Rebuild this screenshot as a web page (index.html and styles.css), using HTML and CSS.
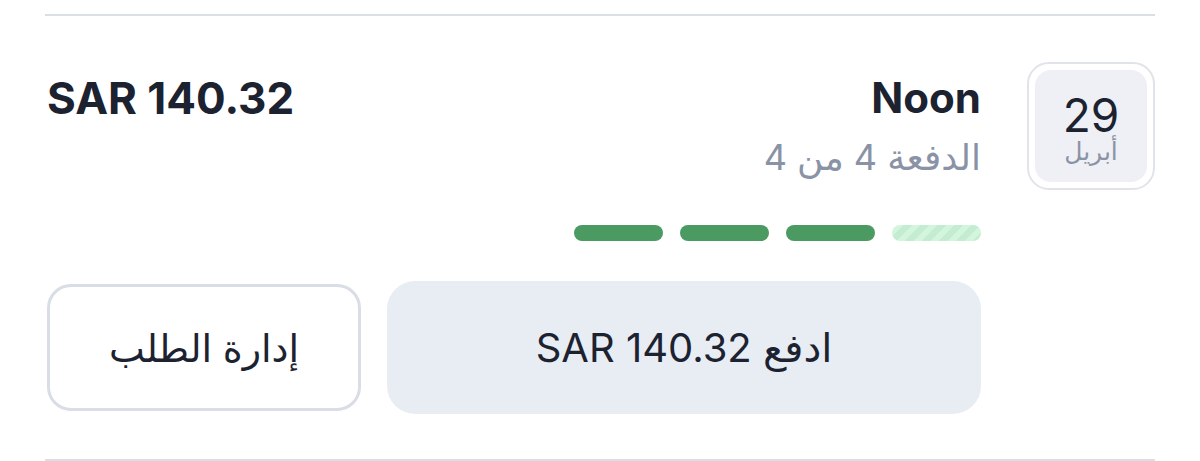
FILE: index.html
```html
<!DOCTYPE html>
<html lang="ar" dir="rtl">
<head>
    <meta charset="UTF-8">
    <meta name="viewport" content="width=device-width, initial-scale=1.0">
    <title>Noon - Installment</title>
    <link rel="stylesheet" href="styles.css">
</head>
<body>
    <div class="list">
        <div class="installment">
            <!-- due date -->
            <div class="date-box">
                <div class="date-inner">
                    <span class="date-day">29</span>
                    <span class="date-month">أبريل</span>
                </div>
            </div>

            <div class="installment-main">
                <div class="installment-top">
                    <div class="merchant">
                        <h2 class="merchant-name">Noon</h2>
                        <p class="merchant-sub">الدفعة 4 من 4</p>
                    </div>
                    <div class="amount" dir="ltr">SAR 140.32</div>
                </div>

                <!-- current installment first (rightmost) -->
                <div class="progress">
                    <span class="step pending"></span>
                    <span class="step done"></span>
                    <span class="step done"></span>
                    <span class="step done"></span>
                </div>

                <div class="actions">
                    <button class="btn btn-pay">ادفع <span dir="ltr">SAR 140.32</span></button>
                    <button class="btn btn-manage">إدارة الطلب</button>
                </div>
            </div>
        </div>
    </div>
</body>
</html>
```

FILE: styles.css
```css
:root {
    --text-dark: #1c2230;
    --text-muted: #8a93a5;
    --line: #dadee5;
    --green: #4b9a61;
    --green-light: #d3f4dd;
    --btn-bg: #e8edf4;
}

body {
    margin: 0;
    background: #fff;
    color: var(--text-dark);
    font-family: Inter, "DejaVu Sans", sans-serif;
}

.list {
    margin: 14px 45px 0 45px;
    border-top: 2px solid var(--line);
    border-bottom: 2px solid var(--line);
}

.installment {
    display: flex;
    gap: 46px;
    padding: 46px 0 45px 0;
}

.date-box {
    width: 128px;
    height: 128px;
    border: 2px solid #e0e4ea;
    border-radius: 22px;
    padding: 6px;
    box-sizing: border-box;
    flex-shrink: 0;
}

.date-inner {
    height: 100%;
    background: #eef0f5;
    border-radius: 16px;
    display: flex;
    flex-direction: column;
    align-items: center;
    justify-content: center;
    gap: 7px;
}

.date-day {
    font-size: 46px;
    line-height: 36px;
    color: var(--text-dark);
    margin-top: 6px;
}

.date-month {
    font-size: 25px;
    line-height: 22px;
    color: var(--text-muted);
}

.installment-main {
    flex: 1;
    padding-left: 2px;
}

.installment-top {
    display: flex;
    justify-content: space-between;
    align-items: flex-start;
}

.merchant-name {
    margin: 12px 0 0 0;
    font-size: 42px;
    line-height: 48px;
    font-weight: 700;
}

.merchant-sub {
    margin: 12px 0 0 0;
    font-size: 36px;
    line-height: 46px;
    color: var(--text-muted);
}

.amount {
    font-size: 44px;
    line-height: 48px;
    font-weight: 700;
    margin-top: 12px;
}

.progress {
    display: flex;
    gap: 17px;
    margin-top: 45px;
}

.step {
    width: 89px;
    height: 16px;
    border-radius: 8px;
}

.step.done {
    background: var(--green);
}

.step.pending {
    background: repeating-linear-gradient(
        -45deg,
        #c3ecd0 0 6px,
        var(--green-light) 6px 12px
    );
}

.actions {
    display: flex;
    gap: 26px;
    margin-top: 40px;
    align-items: center;
}

.btn {
    font-family: Inter, "DejaVu Sans", sans-serif;
    color: var(--text-dark);
    cursor: pointer;
}

.btn-pay {
    flex: 1;
    height: 133px;
    border: none;
    border-radius: 28px;
    background: var(--btn-bg);
    font-size: 40px;
}

.btn-manage {
    width: 314px;
    height: 127px;
    border: 3px solid #d8dde6;
    border-radius: 24px;
    background: #fff;
    font-size: 38px;
}
```
